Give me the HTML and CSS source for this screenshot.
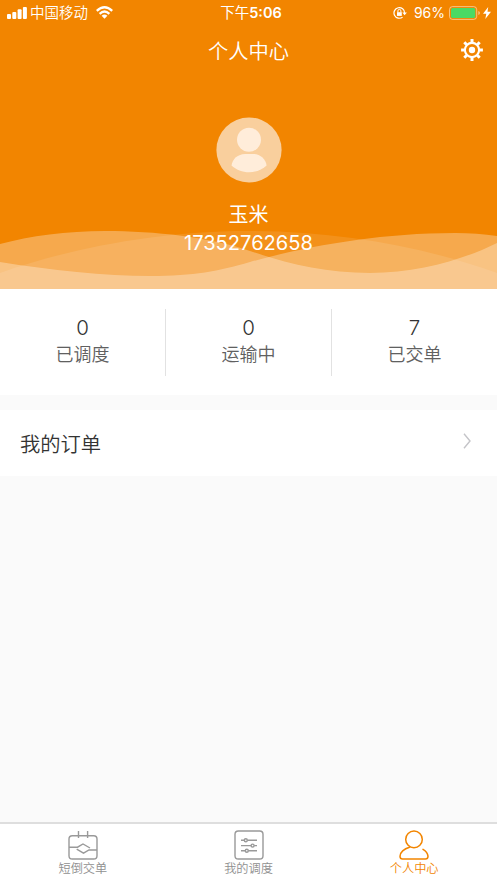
FILE: index.html
```html
<!DOCTYPE html>
<html lang="zh-CN">
<head>
<meta charset="utf-8">
<title>个人中心</title>
<link rel="stylesheet" href="styles.css">
</head>
<body>
<div class="app">
  <header class="hero">
    <svg class="waves" viewBox="0 0 497 60" preserveAspectRatio="none" fill="#fff">
      <path opacity=".3" d="M0 15C30 7 67 2 105 2C155 2 210 8 250 22C285 34 325 44 370 44C420 44 467 29 497 14V60H0Z"/>
      <path opacity=".1" d="M0 44C70 19 160 2 247 2C340 2 425 18 497 44V60H0Z"/>
      <path opacity=".3" d="M0 33C50 41 105 47 150 47C195 47 218 42 250 33C300 19 375 4 455 4Q477 4 497 7V60H0Z"/>
    </svg>
    <div class="status">
      <div class="status-left">
        <svg width="20" height="13" viewBox="0 0 20 13" fill="#fff"><rect y="8" width="4" height="5" rx="1"/><rect x="5.3" y="6" width="4" height="7" rx="1"/><rect x="10.6" y="3.3" width="4" height="9.7" rx="1"/><rect x="15.9" y="1" width="4" height="12" rx="1"/></svg>
        <span class="carrier">中国移动</span>
        <svg width="17" height="13" viewBox="0 0 17 13" fill="none" stroke="#fff" stroke-width="2.3"><path d="M.8 4.8Q8.5-2.3 16.2 4.8M3.6 7.8Q8.5 3.3 13.4 7.8"/><path d="M5.6 9.8Q8.5 7.2 11.4 9.8L8.5 12.8Z" fill="#fff" stroke="none"/></svg>
      </div>
      <span class="time">下午<b>5:06</b></span>
      <div class="status-right">
        <svg class="lock" width="14" height="14" viewBox="0 0 14 14" fill="none" stroke="#fff" stroke-width="1.2"><path d="M11.6 7A5.3 5.3 0 1 0 9.6 11.1"/><path d="M9.3 6.5h4.6L11.6 9.3Z" fill="#fff" stroke="none"/><rect x="4" y="6.2" width="4.8" height="3.7" fill="#fff" stroke="none"/><path d="M4.9 6.4V4.9a1.5 1.5 0 0 1 3 0V6.4" stroke-width="1"/></svg>
        <span class="percent">96%</span>
        <svg class="battery" width="32" height="14" viewBox="0 0 32 14"><rect x=".5" y=".6" width="27.2" height="12.8" rx="3" fill="none" stroke="#fff" stroke-opacity=".5"/><rect x="2" y="2.1" width="24.3" height="9.8" rx="1.7" fill="#4cd964"/><path d="M29.3 5v4q1.7-.5 1.7-2t-1.7-2" fill="#fff" opacity=".5"/></svg>
        <svg width="8" height="12" viewBox="0 0 8 12"><path d="M5.2 0L0 6.8h3.3L2.3 12 8 4.8H4.5Z" fill="#fff"/></svg>
      </div>
    </div>
    <div class="nav">
      <h1>个人中心</h1>
      <svg class="gear" width="22" height="22" viewBox="-11 -11 22 22"><g fill="none" stroke="#fff"><circle r="7.1" stroke-width="2.1"/><path stroke-width="3" d="M0-7.4V-10.9M0 7.4V10.9M7.4 0H10.9M-7.4 0H-10.9M5.3-5.3L7.7-7.7M5.3 5.3L7.7 7.7M-5.3 5.3L-7.7 7.7M-5.3-5.3L-7.7-7.7"/></g><circle r="3.2" fill="#fff"/></svg>
    </div>
    <div class="profile">
      <svg width="66" height="66" viewBox="0 0 66 66"><circle cx="33" cy="33" r="32.6" fill="#f9cf9d"/><circle cx="33" cy="22.8" r="12" fill="#ffedda"/><path d="M15.5 48.5C16.3 42 22 37 29 37H37C44 37 49.8 42 50.6 48.5C46 52.8 39.5 55.3 33 55.3S20 52.8 15.5 48.5Z" fill="#ffedda"/></svg>
      <div class="name">玉米</div>
      <div class="phone">17352762658</div>
    </div>
  </header>
  <section class="stats">
    <div class="stat"><b>0</b><span>已调度</span></div>
    <div class="stat"><b>0</b><span>运输中</span></div>
    <div class="stat"><b>7</b><span>已交单</span></div>
  </section>
  <section class="row">
    <span>我的订单</span>
    <svg width="8" height="16" viewBox="0 0 8 16" fill="none" stroke="#c4c4c8" stroke-width="1.4"><path d="M1 .8L7 8L1 15.2"/></svg>
  </section>
  <nav class="tabs">
    <div class="tab">
      <svg width="30" height="30" viewBox="0 0 30 30" fill="none" stroke="#999" stroke-width="1.4"><rect x="1" y="5.7" width="28" height="23.3" rx="3.3"/><path d="M10.5 1v7M19.6 1v7M1 17.2H9.5L15 14L22 18M29 20H21L15.5 23.2L8.7 19.2"/></svg>
      <span>短倒交单</span>
    </div>
    <div class="tab">
      <svg width="30" height="30" viewBox="0 0 30 30" fill="none" stroke="#999" stroke-width="1.4"><rect x="1" y="1" width="28" height="28" rx="3.3"/><path d="M7 10.3h3.2M13.4 10.3H23M7 15.6h10M20.2 15.6H23M7 20.8h4.2M14.4 20.8H23"/><circle cx="11.8" cy="10.3" r="1.5"/><circle cx="18.6" cy="15.6" r="1.5"/><circle cx="12.8" cy="20.8" r="1.5"/></svg>
      <span>我的调度</span>
    </div>
    <div class="tab active">
      <svg width="30" height="30" viewBox="0 0 30 30" fill="none" stroke="#f28500" stroke-width="1.5" stroke-linecap="round"><circle cx="15" cy="9.4" r="8.3"/><path d="M10.5 17.2C5 18.8 1 22.5 1 26.2Q1 29 3.6 29H26.4Q29 29 29 26.2C28.7 23.5 26.8 21 24 19.3"/></svg>
      <span>个人中心</span>
    </div>
  </nav>
</div>
</body>
</html>
```

FILE: styles.css
```css
* { box-sizing: border-box; }
body {
  margin: 0;
  font-family: Inter, "Noto Sans CJK SC", sans-serif;
  color: #333;
  background: #fafafa;
}
svg { display: block; flex: none; }
.app { display: flex; flex-direction: column; height: 883px; overflow: hidden; }
.hero { position: relative; height: 289px; background: #f28500; color: #fff; }
.waves { position: absolute; left: 0; bottom: 0; width: 100%; height: 60px; }
.status {
  display: grid;
  grid-template-columns: 1fr auto 1fr;
  align-items: center;
  height: 25px;
  padding: 0 6px 0 7px;
  font-size: 14.5px;
  line-height: 25px;
}
.status-left, .status-right { display: flex; align-items: center; }
.status-right { justify-content: flex-end; }
.carrier { margin: 0 8px 0 3px; font-weight: 350; }
.time { margin-left: 4px; font-size: 14.5px; }
.time b { font-weight: 600; }
.lock { margin-right: 7px; }
.percent { font-size: 14px; margin-right: 4px; }
.battery { margin-right: 2px; }
.nav {
  display: grid;
  grid-template-columns: 1fr auto 1fr;
  align-items: center;
  height: 50px;
  padding-right: 14px;
}
.nav h1 { grid-column: 2; margin: -1px -14px 0 0; font-size: 20.3px; font-weight: 350; }
.gear { justify-self: end; }
.profile {
  position: relative;
  display: flex;
  flex-direction: column;
  align-items: center;
  padding-top: 42px;
}
.name { margin-top: 18px; font-size: 20px; font-weight: 400; line-height: 28px; }
.phone { font-size: 20.1px; line-height: 29px; }
.stats { display: flex; height: 106px; padding-top: 20px; background: #fff; }
.stat {
  flex: 1;
  display: flex;
  flex-direction: column;
  align-items: center;
  height: 67px;
  padding-top: 5px;
}
.stat + .stat { border-left: 1px solid #e2e2e2; }
.stat b { font-size: 20.5px; font-weight: 300; line-height: 27px; }
.stat span { font-size: 18px; font-weight: 350; line-height: 27px; color: #606060; }
.row {
  display: flex;
  align-items: center;
  justify-content: space-between;
  height: 66px;
  margin-top: 15px;
  padding: 0 26px 4px 20px;
  background: #fff;
  font-size: 20.3px;
  font-weight: 350;
}
.row span { padding-top: 4px; }
.tabs {
  display: flex;
  height: 61px;
  margin-top: auto;
  border-top: 2px solid #dedede;
  background: #fff;
}
.tab {
  flex: 1;
  display: flex;
  flex-direction: column;
  align-items: center;
  padding-top: 6px;
  font-size: 12.2px;
  font-weight: 350;
  line-height: 17px;
  color: #909090;
}
.tab.active { color: #f28500; }
```
